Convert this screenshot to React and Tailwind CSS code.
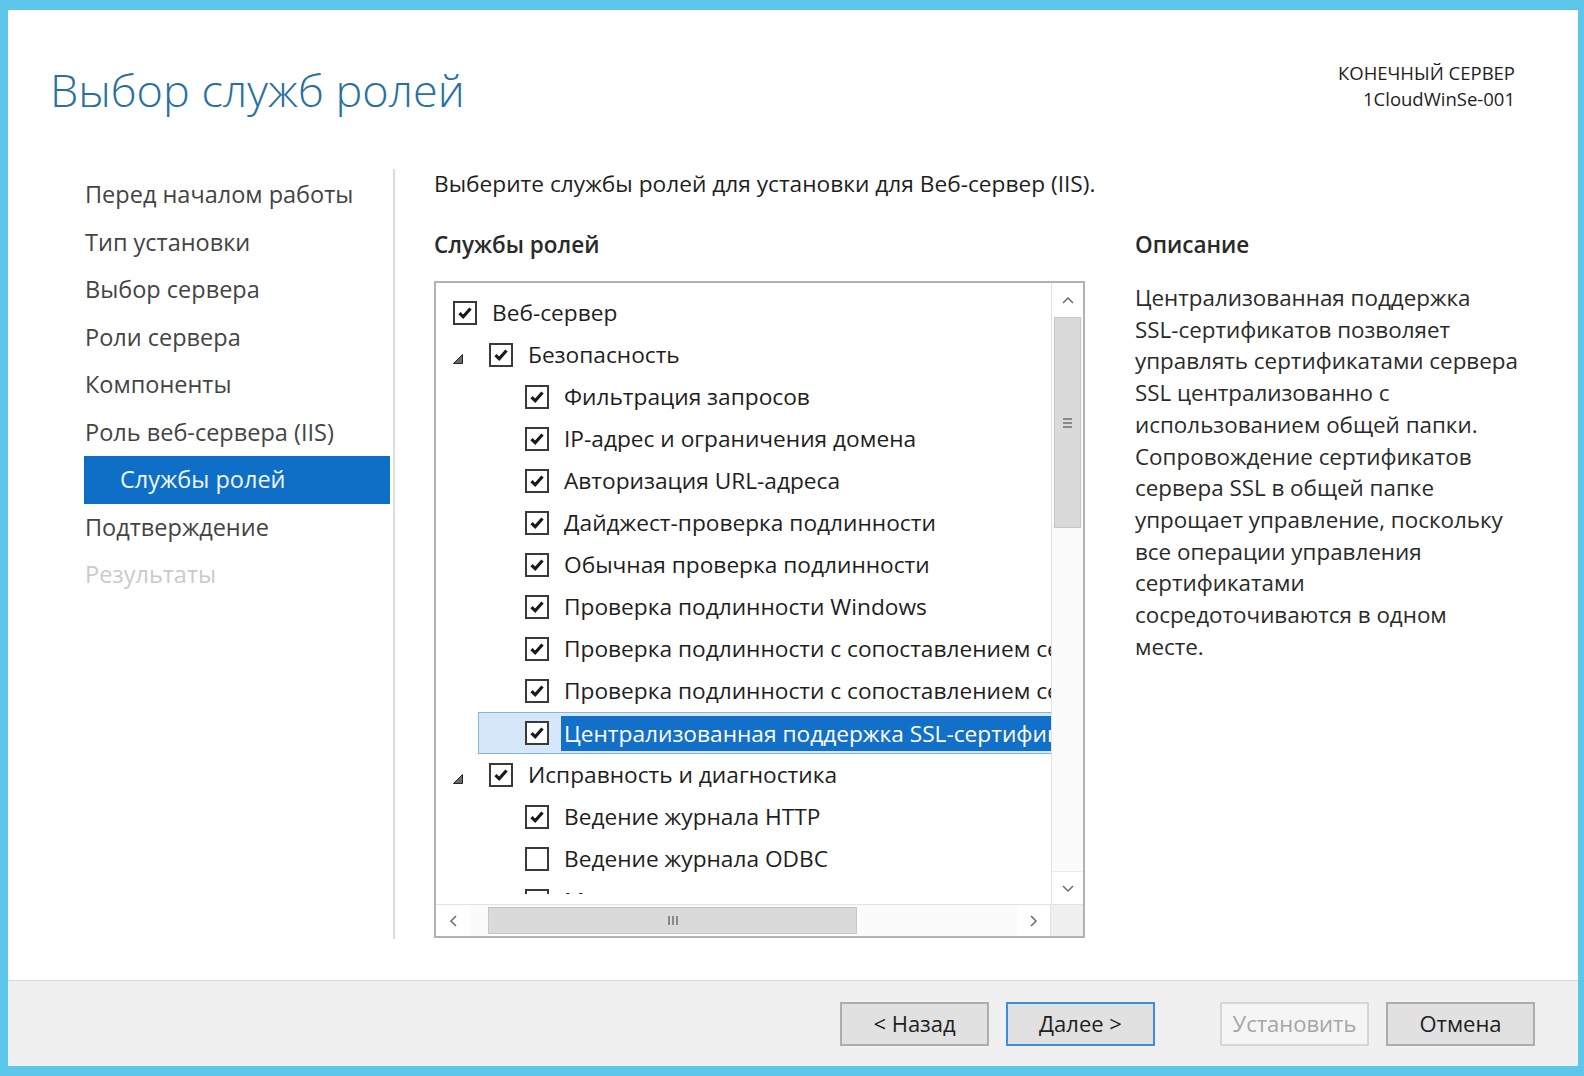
import React from 'react';

const navItems = [
  { label: 'Перед началом работы' },
  { label: 'Тип установки' },
  { label: 'Выбор сервера' },
  { label: 'Роли сервера' },
  { label: 'Компоненты' },
  { label: 'Роль веб-сервера (IIS)' },
  { label: 'Службы ролей', active: true },
  { label: 'Подтверждение' },
  { label: 'Результаты', disabled: true },
];

const rows = [
  { level: 0, text: 'Веб-сервер', checked: true },
  { level: 1, text: 'Безопасность', checked: true, expander: true },
  { level: 2, text: 'Фильтрация запросов', checked: true },
  { level: 2, text: 'IP-адрес и ограничения домена', checked: true },
  { level: 2, text: 'Авторизация URL-адреса', checked: true },
  { level: 2, text: 'Дайджест-проверка подлинности', checked: true },
  { level: 2, text: 'Обычная проверка подлинности', checked: true },
  { level: 2, text: 'Проверка подлинности Windows', checked: true },
  { level: 2, text: 'Проверка подлинности с сопоставлением сертификата клиента', checked: true },
  { level: 2, text: 'Проверка подлинности с сопоставлением сертификата клиента IIS', checked: true },
  { level: 2, text: 'Централизованная поддержка SSL-сертификатов', checked: true, selected: true },
  { level: 1, text: 'Исправность и диагностика', checked: true, expander: true },
  { level: 2, text: 'Ведение журнала HTTP', checked: true },
  { level: 2, text: 'Ведение журнала ODBC', checked: false },
  { level: 2, text: 'Монитор запросов', checked: false },
];

const indent = ['w-0', 'w-[36px]', 'w-[72px]'];

const description = [
  'Централизованная поддержка',
  'SSL-сертификатов позволяет',
  'управлять сертификатами сервера',
  'SSL централизованно с',
  'использованием общей папки.',
  'Сопровождение сертификатов',
  'сервера SSL в общей папке',
  'упрощает управление, поскольку',
  'все операции управления',
  'сертификатами',
  'сосредоточиваются в одном',
  'месте.',
];

const Checkbox = ({ checked }) => (
  <div className="w-[24px] h-[24px] shrink-0 border-2 border-[#3a3a3a] bg-white flex items-center justify-center">
    {checked && (
      <svg width="18" height="18" viewBox="0 0 18 18">
        <path d="M3.5 9.2 L7.2 12.8 L14.5 4.5" fill="none" stroke="#1a1a1a" strokeWidth="3.2" />
      </svg>
    )}
  </div>
);

const Expander = () => (
  <svg width="10" height="10" viewBox="0 0 10 10" className="mt-[8px]">
    <polygon points="9.5,0.5 9.5,9.5 0.5,9.5" fill="#6a6a6a" stroke="#262626" strokeWidth="1" />
  </svg>
);

const Chevron = ({ dir }) => {
  const pts = {
    up: '1,7 6,2 11,7',
    down: '1,2 6,7 11,2',
    left: '7,1 2,6 7,11',
    right: '2,1 7,6 2,11',
  }[dir];
  const vert = dir === 'up' || dir === 'down';
  return (
    <svg width={vert ? 12 : 9} height={vert ? 9 : 12} viewBox={vert ? '0 0 12 9' : '0 0 9 12'}>
      <polyline points={pts} fill="none" stroke="#6b6b6b" strokeWidth="1.5" />
    </svg>
  );
};

const Row = ({ row }) => {
  if (row.selected) {
    return (
      <div className="flex items-center h-[42px] ml-[42px] w-max pl-[16px] bg-[#d5e7f8] border border-[#7fb5e8]">
        <div className="w-[30px] shrink-0" />
        <Checkbox checked={row.checked} />
        <span className="ml-[12px] pl-[3px] pr-[6px] leading-[35px] bg-[#1370c9] text-white whitespace-nowrap">
          {row.text}
        </span>
      </div>
    );
  }
  return (
    <div className="flex items-center h-[42px] w-max pl-[17px]">
      <div className={`${indent[row.level]} shrink-0 flex items-center`}>
        {row.expander && <Expander />}
      </div>
      <Checkbox checked={row.checked} />
      <span className="ml-[15px] whitespace-nowrap text-[#1e1e1e]">{row.text}</span>
    </div>
  );
};

const ListBox = () => (
  <div className="w-[651px] h-[657px] border-2 border-[#b2b2b2] flex flex-col bg-white">
    <div className="flex h-[621px]">
      <div className="w-[615px] flex flex-col">
        <div className="h-[611px] overflow-hidden pt-[9px]">
          {rows.map((r, i) => (
            <Row key={i} row={r} />
          ))}
        </div>
      </div>
      <div className="w-[32px] flex flex-col border-l border-[#e2e2e2] bg-[#fbfbfb]">
        <div className="h-[34px] flex items-center justify-center bg-white">
          <Chevron dir="up" />
        </div>
        <div className="h-[211px] mx-[2px] bg-[#dadada] border border-[#c6c6c6] flex flex-col items-center justify-center gap-[2px]">
          <div className="w-[9px] h-[2px] bg-[#8a8a8a]" />
          <div className="w-[9px] h-[2px] bg-[#8a8a8a]" />
          <div className="w-[9px] h-[2px] bg-[#8a8a8a]" />
        </div>
        <div className="flex-1" />
        <div className="h-[33px] flex items-center justify-center bg-white border-t border-[#ececec]">
          <Chevron dir="down" />
        </div>
      </div>
    </div>
    <div className="flex h-[32px] border-t border-[#e2e2e2]">
      <div className="w-[615px] flex bg-[#fbfbfb]">
        <div className="w-[34px] flex items-center justify-center bg-white">
          <Chevron dir="left" />
        </div>
        <div className="w-[18px]" />
        <div className="w-[369px] my-[2px] bg-[#dadada] border border-[#c6c6c6] flex items-center justify-center gap-[2px]">
          <div className="w-[2px] h-[9px] bg-[#8a8a8a]" />
          <div className="w-[2px] h-[9px] bg-[#8a8a8a]" />
          <div className="w-[2px] h-[9px] bg-[#8a8a8a]" />
        </div>
        <div className="flex-1" />
        <div className="w-[34px] flex items-center justify-center bg-white border-r border-[#e2e2e2]">
          <Chevron dir="right" />
        </div>
      </div>
      <div className="w-[32px] bg-[#f0f0f0]" />
    </div>
  </div>
);

const Button = ({ children, variant }) => {
  const styles = {
    normal: 'bg-[#e1e1e1] border-2 border-[#adadad] text-[#1e1e1e]',
    primary: 'bg-[#e1e1e1] border-2 border-[#3d8ede] text-[#1e1e1e]',
    disabled: 'bg-[#f5f5f5] border-2 border-[#d6d6d6] text-[#a6a6a6]',
  }[variant || 'normal'];
  return (
    <div className={`w-[149px] h-[44px] flex items-center justify-center text-[22px] ${styles}`}>
      {children}
    </div>
  );
};

export default function App() {
  return (
    <div className="w-[1584px] h-[1076px] bg-[#5cc7ea] pt-[10px] pl-[8px] pr-[6px] pb-[10px] font-['Open_Sans',sans-serif]">
      <div className="w-full h-full bg-white flex flex-col">
        {/* header */}
        <div className="h-[159px] flex justify-between items-start shrink-0">
          <div className="pt-[57px] pl-[42px] text-[45px] leading-[45px] font-light text-[#26719f] whitespace-nowrap">
            Выбор служб ролей
          </div>
          <div className="pt-[50px] pr-[63px] text-right text-[18.5px] leading-[26px] text-[#1e1e1e]">
            <div>КОНЕЧНЫЙ СЕРВЕР</div>
            <div>1CloudWinSe-001</div>
          </div>
        </div>

        {/* body */}
        <div className="h-[811px] flex items-start shrink-0">
          <div className="pl-[76px] pt-[2px] w-[385px] shrink-0">
            {navItems.map((n) => (
              <div
                key={n.label}
                className={
                  n.active
                    ? 'h-[47.5px] w-[306px] flex items-center pl-[36px] bg-[#0f6fc6] text-[#eef5fc] text-[23.5px] whitespace-nowrap'
                    : n.disabled
                    ? 'h-[47.5px] w-[306px] flex items-center pl-[1px] text-[#cacaca] text-[23.5px] whitespace-nowrap'
                    : 'h-[47.5px] w-[306px] flex items-center pl-[1px] text-[#444444] text-[23.5px] whitespace-nowrap'
                }
              >
                {n.label}
              </div>
            ))}
          </div>
          <div className="w-[2px] h-[770px] bg-[#dcdcdc] shrink-0" />
          <div className="pl-[39px] flex flex-col text-[22.7px] text-[#1e1e1e]">
            <div className="leading-[30px] whitespace-nowrap">
              Выберите службы ролей для установки для Веб-сервер (IIS).
            </div>
            <div className="flex mt-[31px] gap-[50px]">
              <div className="flex flex-col">
                <div className="leading-[30px] font-semibold text-[22.5px] text-[#2a2a2a]">Службы ролей</div>
                <div className="mt-[21px]">
                  <ListBox />
                </div>
              </div>
              <div className="flex flex-col">
                <div className="leading-[30px] font-semibold text-[22.5px] text-[#2a2a2a]">Описание</div>
                <div className="mt-[22px] text-[22.4px] leading-[31.7px] whitespace-nowrap text-[#2a2a2a]">
                  {description.map((l, i) => (
                    <div key={i}>{l}</div>
                  ))}
                </div>
              </div>
            </div>
          </div>
        </div>

        {/* footer */}
        <div className="flex-1 bg-[#f0f0f0] border-t border-[#d6d6d6] flex items-center justify-end pr-[43px]">
          <div className="flex gap-[17px]">
            <Button>&lt; Назад</Button>
            <Button variant="primary">Далее &gt;</Button>
          </div>
          <div className="flex gap-[17px] ml-[65px]">
            <Button variant="disabled">Установить</Button>
            <Button>Отмена</Button>
          </div>
        </div>
      </div>
    </div>
  );
}
